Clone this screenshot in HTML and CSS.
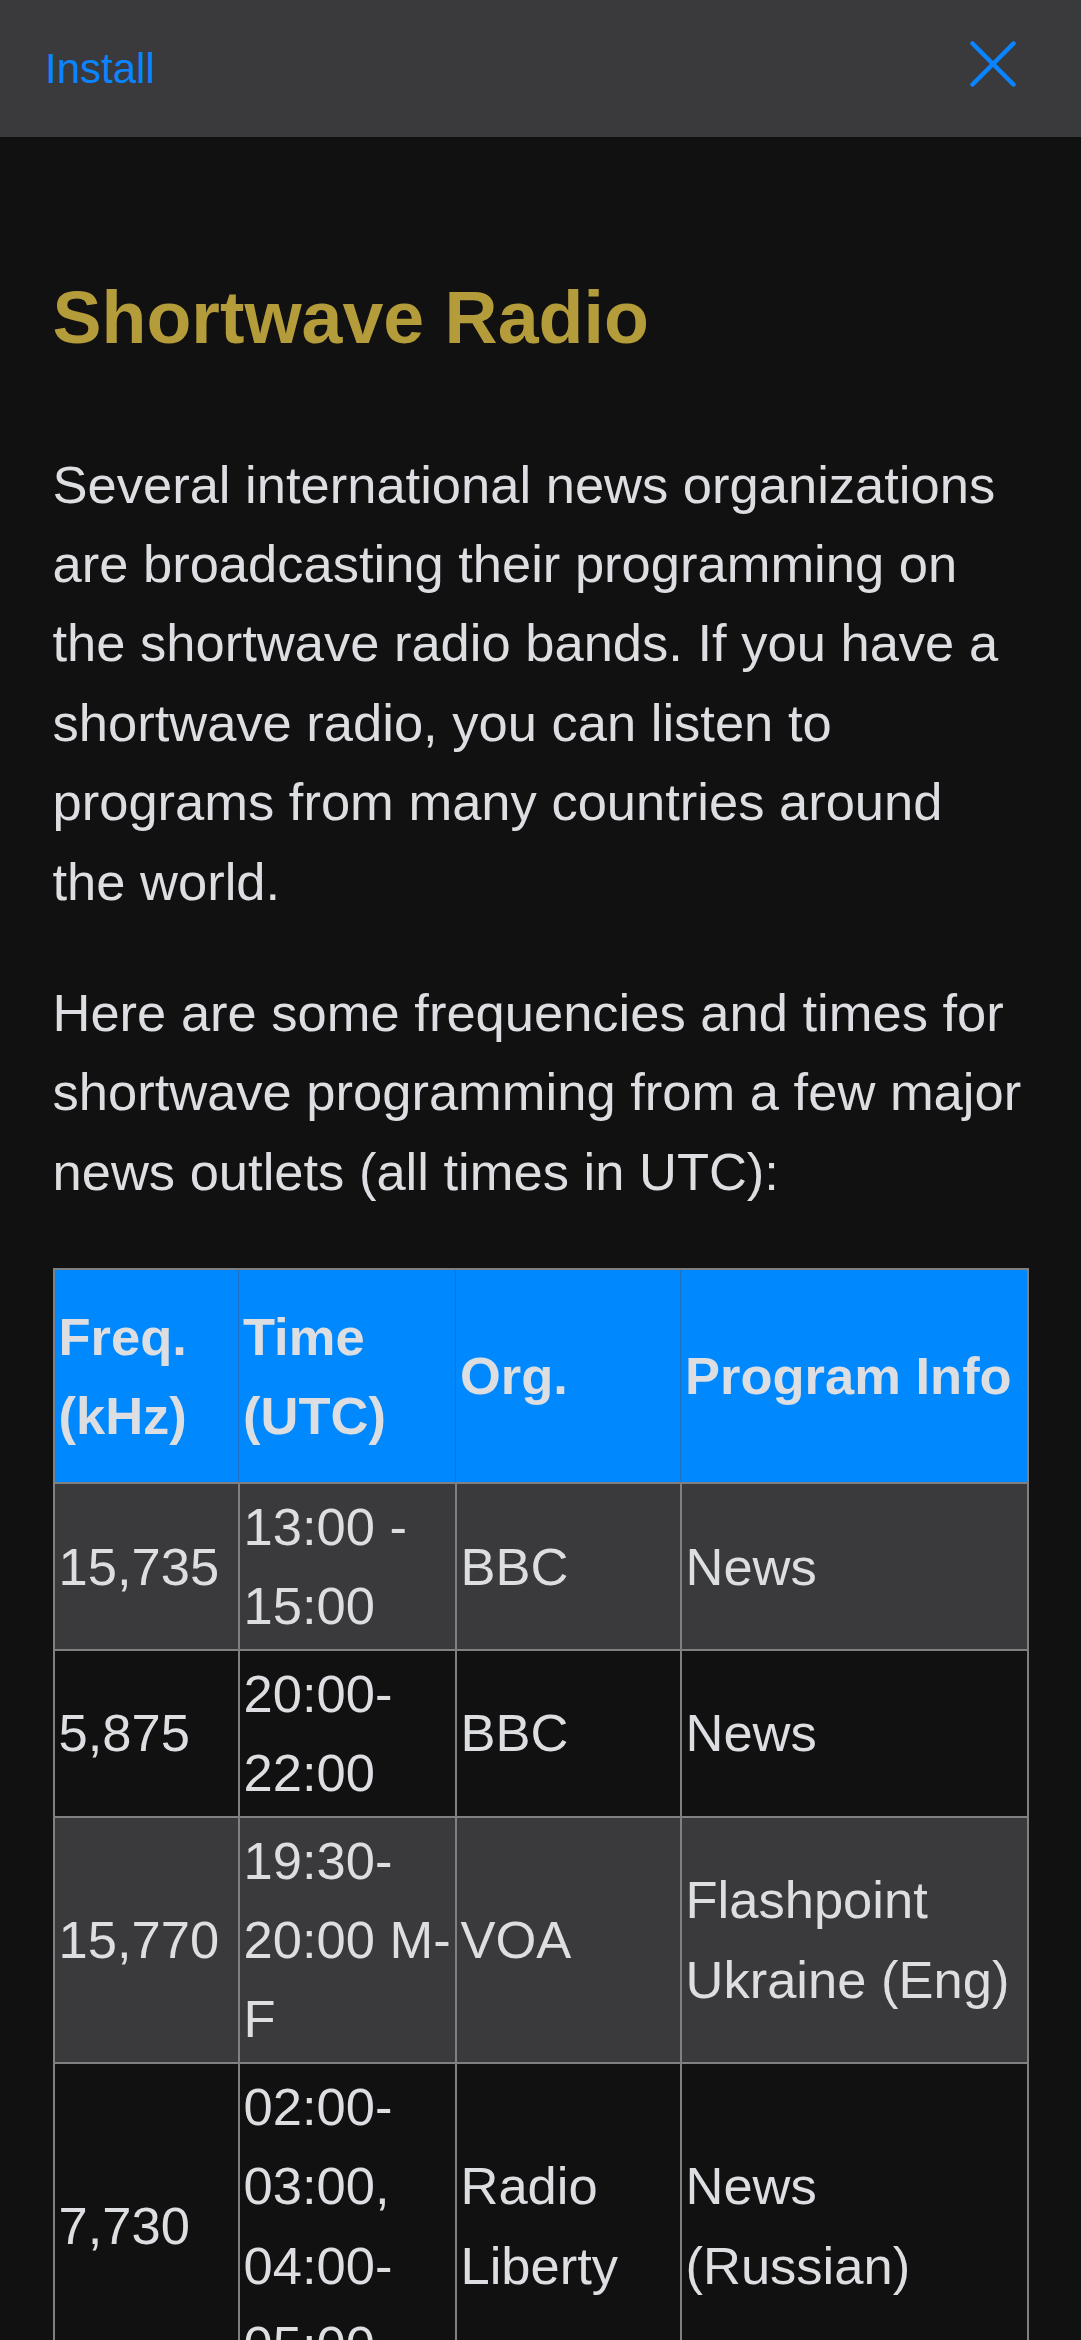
FILE: index.html
```html
<!DOCTYPE html>
<html lang="en">
<head>
<meta charset="utf-8">
<title>Shortwave Radio</title>
<link rel="stylesheet" href="styles.css">
</head>
<body>
<header class="install-bar">
  <span class="install">Install</span>
  <button class="close" aria-label="Close">
    <svg class="close-icon" width="46" height="46" viewBox="0 0 46 46">
      <path d="M2.5 2.5 L43.5 43.5 M43.5 2.5 L2.5 43.5" fill="none" stroke="#0a84ff" stroke-width="4.5" stroke-linecap="round"/>
    </svg>
  </button>
</header>
<main class="article">
  <h1 class="title">Shortwave Radio</h1>
  <p class="text">Several international news organizations are broadcasting their programming on the shortwave radio bands. If you have a shortwave radio, you can listen to programs from many countries around the world.</p>
  <p class="text">Here are some frequencies and times for shortwave programming from a few major news outlets (all times in UTC):</p>
  <table class="schedule">
    <colgroup>
      <col class="c-freq">
      <col class="c-time">
      <col class="c-org">
      <col class="c-info">
    </colgroup>
    <thead>
      <tr><th>Freq. (kHz)</th><th>Time (UTC)</th><th>Org.</th><th>Program Info</th></tr>
    </thead>
    <tbody>
      <tr><td>15,735</td><td>13:00 - 15:00</td><td>BBC</td><td>News</td></tr>
      <tr><td>5,875</td><td>20:00-22:00</td><td>BBC</td><td>News</td></tr>
      <tr><td>15,770</td><td>19:30-20:00 M-F</td><td>VOA</td><td>Flashpoint Ukraine (Eng)</td></tr>
      <tr><td>7,730</td><td>02:00-03:00, 04:00-05:00</td><td>Radio Liberty</td><td>News (Russian)</td></tr>
    </tbody>
  </table>
</main>
</body>
</html>
```
FILE: styles.css
```css
html, body {
  margin: 0;
  padding: 0;
  background: #111111;
}
body {
  font-family: "Liberation Sans", Arial, sans-serif;
  color: #dddee1;
}
.install-bar {
  height: 137px;
  box-sizing: border-box;
  background: #3a3a3c;
  display: flex;
  align-items: center;
  justify-content: space-between;
  padding: 0 65px 0 45px;
}
.install {
  font-size: 42px;
  color: #0a84ff;
}
.close {
  background: none;
  border: 0;
  padding: 0;
  margin: 0 0 10px 0;
  display: flex;
}
.close-icon {
  display: block;
}
.article {
  padding: 139px 52.5px 60px;
}
.title {
  margin: 0 0 84px;
  font-size: 73.5px;
  line-height: 84.5px;
  font-weight: bold;
  color: #b49c3b;
}
.text {
  margin: 0 0 52px;
  font-size: 52.5px;
  line-height: 79.4px;
}
.schedule {
  margin-top: 57px;
  width: 100%;
  table-layout: fixed;
  border-collapse: collapse;
  border: 2.6px solid #808080;
  font-size: 52.5px;
  line-height: 79.4px;
}
.c-freq { width: 185px; }
.c-time { width: 217px; }
.c-org { width: 225px; }
.schedule th {
  background: #0088ff;
  color: #dddee1;
  font-weight: bold;
  text-align: left;
  vertical-align: middle;
  padding: 26.5px 1px 26.5px 4px;
  border: 1px solid #1f70c0;
}
.schedule td {
  text-align: left;
  vertical-align: middle;
  padding: 3px 1px 3px 4px;
  border: 2.6px solid #808080;
}
.schedule tbody tr:nth-child(odd) td {
  background: #3a3a3c;
}
.schedule tbody tr:nth-child(even) td {
  background: #111111;
}
```
